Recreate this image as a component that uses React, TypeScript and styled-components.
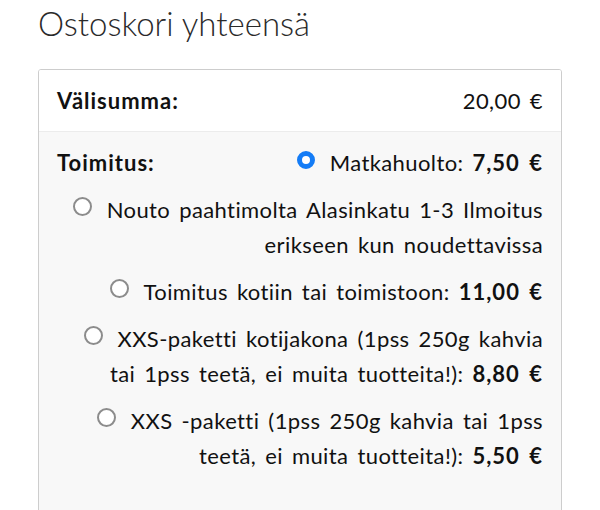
import styled, { createGlobalStyle } from "styled-components";

const GlobalStyle = createGlobalStyle`
  html, body {
    margin: 0;
    padding: 0;
    overflow: hidden;
    background: #ffffff;
  }
  body {
    font-family: "Lato", "Liberation Sans", sans-serif;
    color: #111111;
  }
`;

const Page = styled.div`
  padding: 0 38px;
`;

const Title = styled.h2`
  margin: 0 0 27px;
  padding-top: 4px;
  font-size: 33px;
  line-height: 38px;
  font-weight: 300;
  color: #2a2a2a;
`;

const TotalsBox = styled.div`
  border: 1px solid #cdcdcd;
  border-radius: 3px;
  overflow: hidden;
`;

const Row = styled.div<{ $shade?: boolean }>`
  padding: 13px 18px;
  font-size: 22px;
  line-height: 35px;
  letter-spacing: 0.4px;
  word-spacing: 3px;
  background: ${(p) => (p.$shade ? "#f8f8f8" : "#ffffff")};
  border-top: ${(p) => (p.$shade ? "1px solid #ececec" : "none")};
`;

const SplitRow = styled(Row)`
  display: flex;
  justify-content: space-between;
  align-items: center;
`;

const Label = styled.span<{ $float?: boolean }>`
  font-weight: 700;
  letter-spacing: 1px;
  float: ${(p) => (p.$float ? "left" : "none")};
`;

const Amount = styled.span`
  font-weight: 400;
`;

const MethodList = styled.ul`
  list-style: none;
  margin: 0;
  padding: 0 0 24px;
  text-align: right;
`;

const Method = styled.li`
  margin: 0 0 12px;
`;

const Radio = styled.input`
  appearance: none;
  width: 19px;
  height: 19px;
  margin: 0 15px 0 0;
  border-radius: 50%;
  border: 2px solid #8c8c8c;
  background: #ffffff;
  vertical-align: 2px;
  box-sizing: border-box;

  &:checked {
    width: 18px;
    height: 18px;
    border: 5.5px solid #147cf6;
  }
`;

const Price = styled.strong`
  font-weight: 700;
  letter-spacing: 1px;
`;

type ShippingMethod = {
  id: string;
  label: string;
  price?: string;
};

const methods: ShippingMethod[] = [
  { id: "matkahuolto", label: "Matkahuolto:", price: "7,50 €" },
  {
    id: "nouto",
    label: "Nouto paahtimolta Alasinkatu 1-3 Ilmoitus erikseen kun noudettavissa",
  },
  { id: "koti", label: "Toimitus kotiin tai toimistoon:", price: "11,00 €" },
  {
    id: "xxs-koti",
    label: "XXS-paketti kotijakona (1pss 250g kahvia tai 1pss teetä, ei muita tuotteita!):",
    price: "8,80 €",
  },
  {
    id: "xxs",
    label: "XXS -paketti (1pss 250g kahvia tai 1pss teetä, ei muita tuotteita!):",
    price: "5,50 €",
  },
];

function App() {
  return (
    <Page>
      <GlobalStyle />
      <Title>Ostoskori yhteensä</Title>
      <TotalsBox>
        <SplitRow>
          <Label>Välisumma:</Label>
          <Amount>20,00 €</Amount>
        </SplitRow>
        <Row $shade>
          <Label $float>Toimitus:</Label>
          <MethodList>
            {methods.map((m, i) => (
              <Method key={m.id}>
                <Radio
                  type="radio"
                  name="shipping"
                  id={m.id}
                  defaultChecked={i === 0}
                />
                <label htmlFor={m.id}>
                  {m.label}
                  {m.price ? (
                    <>
                      {" "}
                      <Price>{m.price}</Price>
                    </>
                  ) : null}
                </label>
              </Method>
            ))}
          </MethodList>
        </Row>
      </TotalsBox>
    </Page>
  );
}

export default App;
